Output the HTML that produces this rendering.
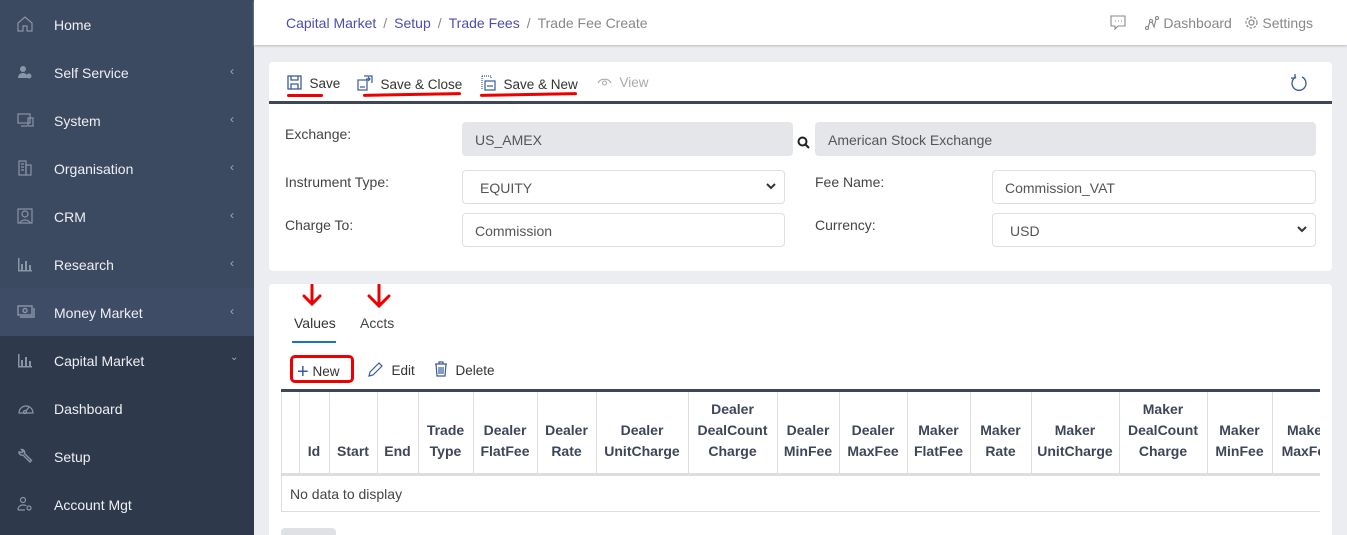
<!DOCTYPE html>
<html><head><meta charset="utf-8"><style>
*{box-sizing:border-box;margin:0;padding:0}
html,body{width:1347px;height:535px;overflow:hidden}
body{background:#ebedf0;font-family:"Liberation Sans",sans-serif;position:relative;font-size:14px;color:#333}
.sb{position:absolute;left:0;top:0;width:254px;height:535px;background:#2e394c}
.sbtop{position:absolute;left:0;top:0;width:254px;height:335px;background:#3b4961}
.it{position:absolute;left:0;width:254px;height:48px;color:#eef0f4;font-size:14px}
.it span{position:absolute;left:54px;top:17px}
.it i{position:absolute;left:17px;top:16px;width:17px;height:16px;font-style:normal}
.it b{position:absolute;left:230px;top:16px;font-weight:normal;color:#aab;font-size:12px}
.hdr{position:absolute;left:254px;top:0;width:1093px;height:45px;background:#fff;box-shadow:0 1px 2px #bbb}
.bc{position:absolute;left:32px;top:15px;font-size:14px;color:#4b4bb4}
.bc s{text-decoration:none;color:#888;margin:0 7px}
.card{position:absolute;left:269px;width:1063px;background:#fff;border-radius:4px}
.lbl{position:absolute;font-size:14px;color:#444}
.inp{position:absolute;height:34px;border:1px solid #dcdfe3;border-radius:4px;background:#fff;font-size:14px;color:#555;padding:9px 12px}
.dis{background:#e4e6ea;border-color:#e4e6ea}
.tb{position:absolute;font-size:13.5px;color:#333}
.red{position:absolute;height:3px;background:#e00;border-radius:2px}
table{border-collapse:collapse;position:absolute;table-layout:fixed;width:1060px}
th{border-right:1px solid #ddd;border-bottom:3px solid #ddd;font-size:14px;color:#3d4658;text-align:center;vertical-align:bottom;padding:0 0 11px;line-height:21px;height:82px;font-weight:bold;overflow:hidden;white-space:nowrap}
.chev{position:absolute;right:8px;top:11px}
</style></head><body>
<div class="sb"><div class="sbtop"></div>
<div class="it" style="top:0"><i><svg width="16" height="16" viewBox="0 0 16 16" fill="none" stroke="#8b95a8" stroke-width="1.2"><path d="M1 7L8 1l7 6v8h-5v-5H6v5H1z"/></svg></i><span>Home</span></div>
<div class="it" style="top:48px"><i><svg width="16" height="16" fill="#8b95a8"><circle cx="6" cy="5" r="3"/><path d="M1 14c0-4 3-5 5-5s4 1 4 3v2z"/><circle cx="12" cy="12" r="2.5"/></svg></i><span>Self Service</span><b>‹</b></div>
<div class="it" style="top:96px"><i><svg width="18" height="16" fill="none" stroke="#8b95a8" stroke-width="1.2"><rect x="1" y="2" width="12" height="9"/><rect x="11" y="6" width="5" height="8"/><path d="M4 14h6"/></svg></i><span>System</span><b>‹</b></div>
<div class="it" style="top:144px"><i><svg width="16" height="16" fill="none" stroke="#8b95a8" stroke-width="1.2"><rect x="2" y="1" width="7" height="14"/><rect x="9" y="5" width="5" height="10"/><path d="M4 4h3M4 7h3M4 10h3"/></svg></i><span>Organisation</span><b>‹</b></div>
<div class="it" style="top:192px"><i><svg width="16" height="16" fill="none" stroke="#8b95a8" stroke-width="1.2"><rect x="1" y="1" width="14" height="14"/><circle cx="8" cy="6" r="3"/><path d="M3 15c1-4 9-4 10 0"/></svg></i><span>CRM</span><b>‹</b></div>
<div class="it" style="top:240px"><i><svg width="16" height="16" fill="#8b95a8"><rect x="1" y="2" width="1.5" height="13"/><rect x="4" y="8" width="2" height="6"/><rect x="8" y="5" width="2" height="9"/><rect x="12" y="9" width="2" height="5"/><rect x="1" y="14" width="14" height="1.5"/></svg></i><span>Research</span><b>‹</b></div>
<div class="it" style="top:288px;background:#3e4c66"><i><svg width="18" height="16" fill="none" stroke="#8b95a8" stroke-width="1.4"><rect x="1" y="2" width="14" height="9"/><path d="M3 13h14V4"/><circle cx="8" cy="6.5" r="2"/></svg></i><span>Money Market</span><b>‹</b></div>
<div class="it" style="top:336px"><i><svg width="16" height="16" fill="#8b95a8"><rect x="1" y="2" width="1.5" height="13"/><rect x="4" y="8" width="2" height="6"/><rect x="8" y="5" width="2" height="9"/><rect x="12" y="9" width="2" height="5"/><rect x="1" y="14" width="14" height="1.5"/></svg></i><span>Capital Market</span><b style="font-size:10px;top:16px">⌄</b></div>
<div class="it" style="top:384px"><i><svg width="18" height="16" fill="none" stroke="#8b95a8" stroke-width="1.2"><path d="M2 13a7 7 0 1 1 14 0z"/><circle cx="8" cy="12" r="1.5"/><path d="M9 11l3-4"/></svg></i><span>Dashboard</span></div>
<div class="it" style="top:432px"><i><svg width="16" height="16" fill="none" stroke="#8b95a8" stroke-width="1.4"><path d="M2 4a3 3 0 0 0 4 3l7 7 1.5-1.5-7-7a3 3 0 0 0-3-4l1.5 2-1 1z"/></svg></i><span>Setup</span></div>
<div class="it" style="top:480px"><i><svg width="16" height="16" fill="none" stroke="#8b95a8" stroke-width="1.2"><circle cx="6" cy="4" r="2.5"/><path d="M1 14c0-4 3-5 5-5 2 0 3 .5 3 1M1 14h7"/><circle cx="12" cy="12" r="2"/></svg></i><span>Account Mgt</span></div>
</div>
<div class="hdr"><div class="bc">Capital Market<s>/</s>Setup<s>/</s>Trade Fees<s>/</s><span style="color:#888">Trade Fee Create</span></div>
<div style="position:absolute;left:856px;top:15px;font-size:14px;color:#888"><svg width="16" height="15" style="vertical-align:-2px" fill="none" stroke="#888" stroke-width="1.1"><path d="M1 1h14v10H8l-3 3v-3H1z"/><path d="M5 6h1M8 6h1M11 6h1"/></svg>
&nbsp;&nbsp;&nbsp;&nbsp;<svg width="14" height="14" fill="none" stroke="#888" stroke-width="1.1" style="vertical-align:-2px"><circle cx="2" cy="12" r="1.5"/><circle cx="6" cy="5" r="1.5"/><circle cx="12" cy="2" r="1.5"/><path d="M3 11l2-5M7 6l2 5 2-8"/></svg> Dashboard&nbsp;&nbsp;&nbsp;<svg width="15" height="15" fill="none" stroke="#888" stroke-width="1.2" style="vertical-align:-2px"><circle cx="7.5" cy="7.5" r="2.5"/><circle cx="7.5" cy="7.5" r="5.5" stroke-dasharray="2.5 1.5"/></svg> Settings</div></div>

<div class="card" style="top:62px;height:209px">
<div style="position:absolute;left:0;top:39px;width:1063px;height:3px;background:#3d4759"></div>
<div class="tb" style="left:18px;top:13px"><svg width="15" height="15" fill="none" stroke="#3a5a9a" stroke-width="1.3" style="vertical-align:-2px"><rect x="1" y="1" width="13" height="13"/><path d="M4 1v4h7V1M4 14v-5h7v5"/></svg>&nbsp; Save</div>
<div class="tb" style="left:88px;top:13px"><svg width="16" height="16" fill="none" stroke="#3a5a9a" stroke-width="1.2" style="vertical-align:-2px"><rect x="1" y="5" width="9" height="10"/><path d="M3 12h5M7 1h8v7M9 4h4M11 2l2 2-2 2"/></svg>&nbsp; Save &amp; Close</div>
<div class="tb" style="left:212px;top:13px"><svg width="15" height="16" fill="none" stroke="#3a5a9a" stroke-width="1.2" style="vertical-align:-2px"><path d="M1 1h9v3" stroke-dasharray="1 1"/><path d="M1 1v14" stroke-dasharray="1 1"/><rect x="4" y="6" width="10" height="9"/><path d="M6 11h6"/></svg>&nbsp; Save &amp; New</div>
<div class="tb" style="left:328px;top:13px;color:#aaa"><svg width="15" height="12" fill="none" stroke="#aaa" stroke-width="1.1"><path d="M1 8a7 6 0 0 1 13 0"/><circle cx="7.5" cy="8" r="2"/></svg>&nbsp; View</div>
<svg style="position:absolute;left:1021px;top:12px" width="18" height="18" fill="none" stroke="#3a5a9a" stroke-width="1.3"><path d="M6 3A7 7 0 1 0 12 3"/><path d="M5 0v4H1"/></svg>
<div class="red" style="left:18px;top:32px;width:36px"></div>
<div class="red" style="left:94px;top:31px;width:98px;transform:rotate(-1deg)"></div>
<div class="red" style="left:211px;top:31px;width:97px;transform:rotate(-1deg)"></div>
<div class="lbl" style="left:16px;top:64px">Exchange:</div>
<div class="inp dis" style="left:193px;top:60px;width:331px">US_AMEX</div>
<svg style="position:absolute;left:528px;top:74px" width="13" height="13" fill="none" stroke="#222" stroke-width="2"><circle cx="5.5" cy="5.5" r="4"/><path d="M8.5 8.5l3.5 3.5"/></svg>
<div class="inp dis" style="left:546px;top:60px;width:501px">American Stock Exchange</div>
<div class="lbl" style="left:16px;top:112px">Instrument Type:</div>
<div class="inp" style="left:193px;top:108px;width:323px;padding-left:17px">EQUITY<svg class="chev" width="10" height="8" fill="none" stroke="#333" stroke-width="2"><path d="M1 2l4 4 4-4"/></svg></div>
<div class="lbl" style="left:546px;top:112px">Fee Name:</div>
<div class="inp" style="left:723px;top:108px;width:324px">Commission_VAT</div>
<div class="lbl" style="left:16px;top:155px">Charge To:</div>
<div class="inp" style="left:193px;top:151px;width:323px">Commission</div>
<div class="lbl" style="left:546px;top:155px">Currency:</div>
<div class="inp" style="left:723px;top:151px;width:324px;padding-left:17px">USD<svg class="chev" width="10" height="8" fill="none" stroke="#333" stroke-width="2"><path d="M1 2l4 4 4-4"/></svg></div>
</div>

<div class="card" style="top:284px;height:260px">
<svg style="position:absolute;left:32px;top:0" width="22" height="22" fill="none" stroke="#e00" stroke-width="3" stroke-linecap="round"><path d="M11 1v18M3 12l8 8 8-8"/></svg>
<svg style="position:absolute;left:97px;top:0" width="26" height="24" fill="none" stroke="#e00" stroke-width="3" stroke-linecap="round"><path d="M13 1v20M3 12l10 10 10-10"/></svg>
<div class="tb" style="left:25px;top:31px;font-size:14px">Values</div>
<div style="position:absolute;left:23px;top:57px;width:44px;height:2px;background:#1a73c8"></div>
<div class="tb" style="left:91px;top:31px;color:#444;font-size:14px">Accts</div>
<div class="tb" style="left:28px;top:77px"><span style="font-size:20px;color:#3a5a9a;vertical-align:-2px;font-weight:300">+</span> New</div>
<div style="position:absolute;left:21px;top:71px;width:64px;height:28px;border:3px solid #e00;border-radius:5px"></div>
<div class="tb" style="left:99px;top:77px"><svg width="16" height="16" fill="none" stroke="#3a5a9a" stroke-width="1.2" style="vertical-align:-2px"><path d="M1 15l1-4 9-9 3 3-9 9z"/></svg>&nbsp; Edit</div>
<div class="tb" style="left:165px;top:77px"><svg width="14" height="16" fill="none" stroke="#3a5a9a" stroke-width="1.2" style="vertical-align:-2px"><path d="M1 3h12M5 3V1h4v2M2 3l1 12h8l1-12M5 6v7M7 6v7M9 6v7"/></svg>&nbsp; Delete</div>
<div style="position:absolute;left:12px;top:105px;width:1039px;height:3px;background:#3d4759"></div>
<div style="position:absolute;left:12px;top:108px;width:1039px;height:120px;border-left:1px solid #ddd;border-bottom:1px solid #ddd;overflow:hidden">
<table style="left:0;top:0"><colgroup><col style="width:17px"><col style="width:30px"><col style="width:48px"><col style="width:41px"><col style="width:55px"><col style="width:64px"><col style="width:59px"><col style="width:92px"><col style="width:89px"><col style="width:62px"><col style="width:68px"><col style="width:63px"><col style="width:61px"><col style="width:88px"><col style="width:88px"><col style="width:65px"><col style="width:70px"></colgroup><tr>
<th></th><th>Id</th><th>Start</th><th>End</th><th>Trade<br>Type</th><th>Dealer<br>FlatFee</th><th>Dealer<br>Rate</th><th>Dealer<br>UnitCharge</th><th>Dealer<br>DealCount<br>Charge</th><th>Dealer<br>MinFee</th><th>Dealer<br>MaxFee</th><th>Maker<br>FlatFee</th><th>Maker<br>Rate</th><th>Maker<br>UnitCharge</th><th>Maker<br>DealCount<br>Charge</th><th>Maker<br>MinFee</th><th style="border-right:0">Maker<br>MaxFee</th>
</tr></table>
<div style="position:absolute;left:8px;top:94px;font-size:14px;color:#444">No data to display</div>
</div>
<div style="position:absolute;left:12px;top:244px;width:55px;height:20px;background:#dfe1e5;border-radius:4px"></div>
</div>
</body></html>
